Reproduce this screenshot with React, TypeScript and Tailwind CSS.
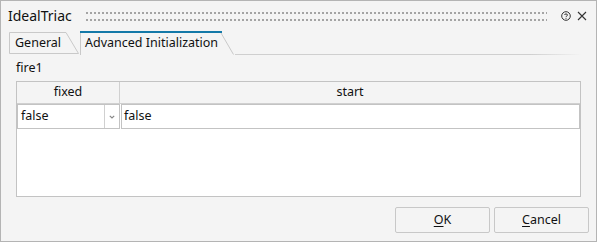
import React from "react";

const grip =
  "h-[2px] bg-[repeating-linear-gradient(90deg,#a4a4a4_0px,#a4a4a4_2px,transparent_2px,transparent_4px)]";

function HelpIcon() {
  return (
    <svg width="10" height="10" viewBox="0 0 10 10" aria-hidden="true">
      <circle cx="5" cy="5" r="4.3" fill="none" stroke="#333" strokeWidth="1" />
      <path
        d="M3.5 4 C3.5 2.6 6.5 2.6 6.5 4 C6.5 5 5 5 5 6"
        fill="none"
        stroke="#333"
        strokeWidth="1"
      />
      <rect x="4.5" y="6.8" width="1" height="1" fill="#333" />
    </svg>
  );
}

function CloseIcon() {
  return (
    <svg width="10" height="10" viewBox="0 0 10 10" aria-hidden="true">
      <path d="M1 1 L9 9 M9 1 L1 9" stroke="#333" strokeWidth="1.1" />
    </svg>
  );
}

function Chevron() {
  return (
    <svg width="6" height="4" viewBox="0 0 6 4" aria-hidden="true">
      <path d="M0.8 0.8 L3 3 L5.2 0.8" fill="none" stroke="#888" strokeWidth="1.2" />
    </svg>
  );
}

export default function App() {
  return (
    <div className="flex h-[242px] w-[597px] flex-col border border-[#b4b4b4] bg-[#f4f4f4] font-['Noto_Sans',sans-serif] text-[#111]">
      {/* title bar */}
      <div className="flex h-[30px] items-center pl-[7px] pr-[9px]">
        <span className="text-[14px] leading-none">IdealTriac</span>
        <div className="ml-[14px] flex flex-1 flex-col gap-[5px] pt-[1px]">
          <div className={grip} />
          <div className={grip} />
        </div>
        <div className="ml-[14px] flex items-center gap-[6px]">
          <HelpIcon />
          <CloseIcon />
        </div>
      </div>

      {/* tabs */}
      <div className="flex h-[24px] items-end pl-[8px]">
        <div className="relative mt-[1px] h-[22px] w-[71px] self-start">
          <svg className="absolute inset-0" width="71" height="22" aria-hidden="true">
            <path d="M0.5 21.5 V0.5 H57 L69.5 21.5 Z" fill="#f4f4f4" stroke="#c9c9c9" />
          </svg>
          <span className="relative block pl-[6px] pt-[3px] text-[12.5px] leading-[16px]">General</span>
        </div>
        <div className="relative h-[24px] w-[155px]">
          <svg className="absolute inset-0" width="155" height="24" aria-hidden="true">
            <path d="M0.5 24 V2 M141 2 L153.5 23.5" fill="none" stroke="#c9c9c9" />
            <rect x="0" y="0" width="142" height="2" fill="#1479a8" />
          </svg>
          <span className="relative block pl-[5px] pt-[4px] text-[12.5px] leading-[16px]">
            Advanced Initialization
          </span>
        </div>
        <div className="mb-[0.5px] mr-[14px] h-[1px] flex-1 bg-[linear-gradient(90deg,#cfcfcf_85%,#f4f4f4)]" />
      </div>

      {/* content */}
      <div className="flex flex-col px-[15px]">
        <div className="flex h-[26px] items-center pt-[1px] text-[12.5px]">fire1</div>
        <div className="flex h-[116px] flex-col border border-[#c3c3c3] bg-white">
          <div className="flex h-[22px] border-b border-[#d0d0d0] bg-[#f4f4f4] text-[12.5px]">
            <div className="flex w-[103px] items-center justify-center border-r border-[#d0d0d0]">fixed</div>
            <div className="flex flex-1 items-center justify-center">start</div>
          </div>
          <div className="flex h-[25px] gap-[1px] text-[12.5px]">
            <div className="flex w-[103px] border border-[#c3c3c3] bg-white">
              <span className="flex flex-1 items-center pl-[3px]">false</span>
              <span className="flex w-[15px] items-center justify-center border-l border-[#d0d0d0]">
                <Chevron />
              </span>
            </div>
            <div className="flex flex-1 items-center border border-[#c3c3c3] bg-white pl-[2px]">false</div>
          </div>
        </div>
      </div>

      {/* buttons */}
      <div className="mt-[10px] flex justify-end gap-[4px] pr-[7px] text-[12.5px]">
        <button className="flex h-[26px] w-[95px] items-center justify-center rounded-[2px] border border-[#c8c8c8] bg-[#f4f4f4]">
          <span>
            <span className="underline underline-offset-2">O</span>K
          </span>
        </button>
        <button className="flex h-[26px] w-[95px] items-center justify-center rounded-[2px] border border-[#c8c8c8] bg-[#f4f4f4]">
          <span>
            <span className="underline underline-offset-2">C</span>ancel
          </span>
        </button>
      </div>
    </div>
  );
}
